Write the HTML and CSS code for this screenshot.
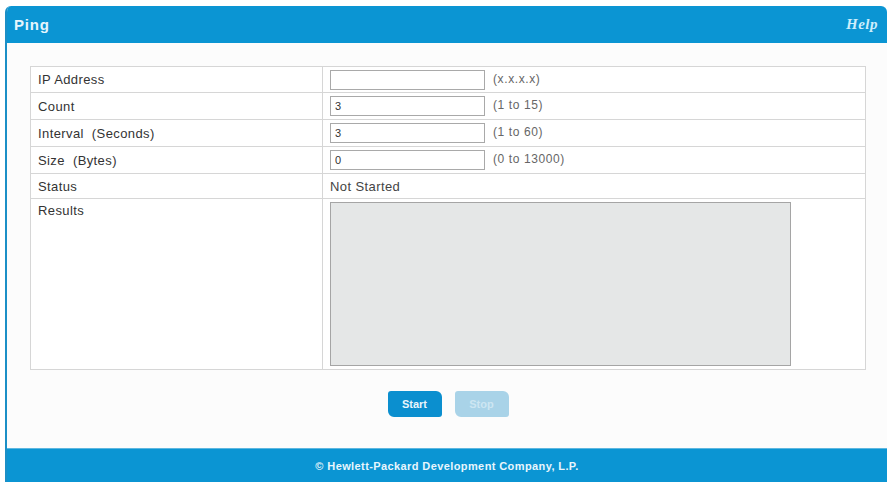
FILE: index.html
```html
<!DOCTYPE html>
<html lang="en">
<head>
<meta charset="utf-8"/>
<title>Ping</title>
<link rel="stylesheet" href="styles.css">
</head>
<body>
<div class="frame">
<div class="header">
<span class="title">Ping</span>
<a class="help" href="#">Help</a>
</div>
<div class="content">
<table class="ping-table">
<tr class="first-row">
<td class="label">IP Address</td>
<td><input class="field" type="text" value=""/><span class="hint">(x.x.x.x)</span></td>
</tr>
<tr>
<td class="label">Count</td>
<td><input class="field" type="text" value="3"/><span class="hint">(1 to 15)</span></td>
</tr>
<tr>
<td class="label">Interval&nbsp; (Seconds)</td>
<td><input class="field" type="text" value="3"/><span class="hint">(1 to 60)</span></td>
</tr>
<tr>
<td class="label">Size&nbsp; (Bytes)</td>
<td><input class="field" type="text" value="0"/><span class="hint">(0 to 13000)</span></td>
</tr>
<tr class="status-row">
<td class="label">Status</td>
<td class="status">Not Started</td>
</tr>
<tr class="results-row">
<td class="label">Results</td>
<td class="results-cell"><textarea class="results" readonly></textarea></td>
</tr>
</table>
<div class="actions">
<button class="btn">Start</button>
<button class="btn disabled" disabled>Stop</button>
</div>
</div>
<div class="footer">&copy; Hewlett-Packard Development Company, L.P.</div>
</div>
</body>
</html>
```

FILE: styles.css
```css
body {
    margin: 0;
    background: #fff;
    font-family: "Liberation Sans", Arial, sans-serif;
    color: #333;
}
.frame {
    margin: 6px 2px 0 5px;
    border-left: 2px solid #1b8fc6;
    border-radius: 6px 6px 0 0;
    background: #fcfcfc;
    overflow: hidden;
}
.header {
    height: 37px;
    background: #0b95d3;
    display: flex;
    align-items: center;
    justify-content: space-between;
    padding: 0 9px 0 7px;
}
.title {
    color: #e6f6fd;
    font-weight: bold;
    font-size: 15px;
    letter-spacing: 0.8px;
}
.help {
    color: #cdeefc;
    font-family: "Liberation Serif", serif;
    font-style: italic;
    font-weight: bold;
    font-size: 15px;
    letter-spacing: 0.5px;
    text-decoration: none;
}
.content {
    padding: 23px 21px 0 23px;
    height: 405px;
    box-sizing: border-box;
}
.ping-table {
    width: 836px;
    border-collapse: collapse;
    background: #fff;
    font-size: 13px;
    letter-spacing: 0.4px;
}
.ping-table td {
    border: 1px solid #d6d6d6;
    height: 26px;
    padding: 0 7px;
    vertical-align: middle;
}
.ping-table td.label {
    width: 277px;
}
.first-row td {
    height: 25px;
}
.status-row td {
    height: 24px;
}
.ping-table td.status {
    color: #444;
}
.field {
    width: 155px;
    height: 20px;
    box-sizing: border-box;
    border: 1px solid #a9a9a9;
    font-family: "Liberation Sans", Arial, sans-serif;
    font-size: 11px;
    color: #333;
    padding: 2px 4px;
    margin: 0;
    vertical-align: middle;
}
.hint {
    margin-left: 8px;
    font-size: 12px;
    letter-spacing: 0.6px;
    color: #666;
}
.ping-table .results-row td {
    height: 166px;
    vertical-align: top;
    padding-top: 4px;
}
.ping-table .results-row td.results-cell {
    padding-top: 3px;
}
.results {
    display: block;
    width: 461px;
    height: 164px;
    box-sizing: border-box;
    margin: 0;
    background: #e5e7e7;
    border: 1px solid #a5a5a5;
    resize: none;
}
.actions {
    display: flex;
    justify-content: center;
    gap: 13px;
    margin-top: 21px;
}
.btn {
    width: 54px;
    height: 26px;
    border: none;
    border-radius: 3px 6px 3px 6px;
    background: #0b8fcf;
    color: #eaf6fc;
    font-family: "Liberation Sans", Arial, sans-serif;
    font-weight: bold;
    font-size: 11px;
    cursor: pointer;
}
.btn.disabled {
    background: #a9d3e8;
    color: #cde6f2;
    cursor: default;
}
.footer {
    height: 34px;
    background: #0b95d3;
    border-top: 1px solid #5db7e0;
    color: #e8f6fd;
    font-weight: bold;
    font-size: 11px;
    letter-spacing: 0.4px;
    display: flex;
    align-items: center;
    justify-content: center;
}
```
